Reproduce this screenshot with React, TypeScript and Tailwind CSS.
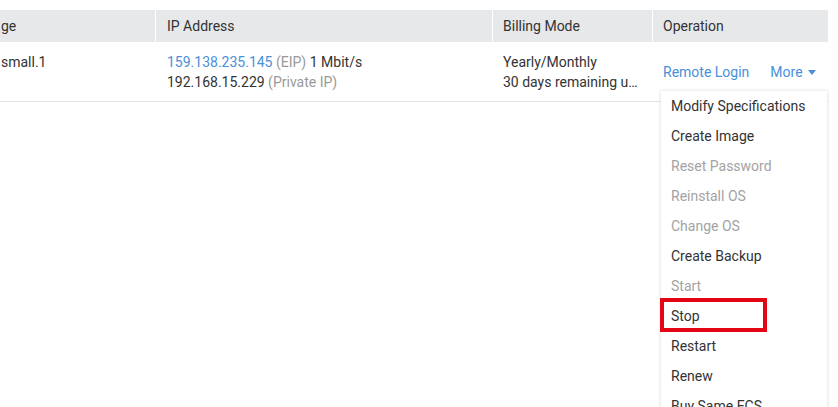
import React from "react";

const items: { label: string; disabled?: boolean; boxed?: boolean }[] = [
  { label: "Modify Specifications" },
  { label: "Create Image" },
  { label: "Reset Password", disabled: true },
  { label: "Reinstall OS", disabled: true },
  { label: "Change OS", disabled: true },
  { label: "Create Backup" },
  { label: "Start", disabled: true },
  { label: "Stop", boxed: true },
  { label: "Restart" },
  { label: "Renew" },
  { label: "Buy Same ECS" },
];

export default function App() {
  return (
    <div
      className="w-[838px] h-[407px] overflow-hidden bg-white relative text-[14px] leading-[20px] text-[#333]"
      style={{ fontFamily: "Roboto, 'Liberation Sans', sans-serif" }}
    >
      <div className="pt-[10px] w-[828px]">
        <div className="flex h-[32px] bg-[#e7e8e9] items-center">
          <div className="w-[155px] pl-[1px]">ge</div>
          <div className="w-[337px] h-full flex items-center border-l border-white pl-[11px]">IP Address</div>
          <div className="w-[160px] h-full flex items-center border-l border-white pl-[10px]">Billing Mode</div>
          <div className="flex-1 h-full flex items-center border-l border-white pl-[10px]">Operation</div>
        </div>
        <div className="flex h-[60px] border-b border-[#e3e4e5] items-start">
          <div className="w-[155px] pl-[1px] pt-[10px]">small.1</div>
          <div className="w-[337px] pl-[12px] pt-[10px]">
            <div>
              <span className="text-[#4a90d9]">159.138.235.145</span>{" "}
              <span className="text-[#9a9a9a]">(EIP)</span> 1 Mbit/s
            </div>
            <div>
              192.168.15.229 <span className="text-[#9a9a9a]">(Private IP)</span>
            </div>
          </div>
          <div className="w-[160px] pl-[11px] pr-[10px] pt-[10px]">
            <div>Yearly/Monthly</div>
            <div className="whitespace-nowrap overflow-hidden text-ellipsis">30 days remaining until expiration</div>
          </div>
          <div className="flex-1 pl-[11px] pt-[20px] flex items-center text-[#4a90d9]">
            <span>Remote Login</span>
            <span className="ml-[21px]">More</span>
            <svg className="ml-[5px]" width="8" height="5" viewBox="0 0 8 5">
              <path d="M0 0 L8 0 L4 5 Z" fill="#4a90d9" />
            </svg>
          </div>
        </div>
      </div>

      <div className="absolute left-[661px] top-[91px] w-[166px] bg-white shadow-[0_0_4px_rgba(0,0,0,0.15)]">
        {items.map((it) => (
          <div
            key={it.label}
            className={`relative h-[30px] flex items-center pl-[10px] whitespace-nowrap ${
              it.disabled ? "text-[#a3a3a3]" : "text-[#333]"
            }`}
          >
            {it.label}
            {it.boxed && (
              <div className="absolute left-[-1px] top-[-3px] w-[107px] h-[34px] border-[4px] border-[#e30613]" />
            )}
          </div>
        ))}
      </div>
    </div>
  );
}
